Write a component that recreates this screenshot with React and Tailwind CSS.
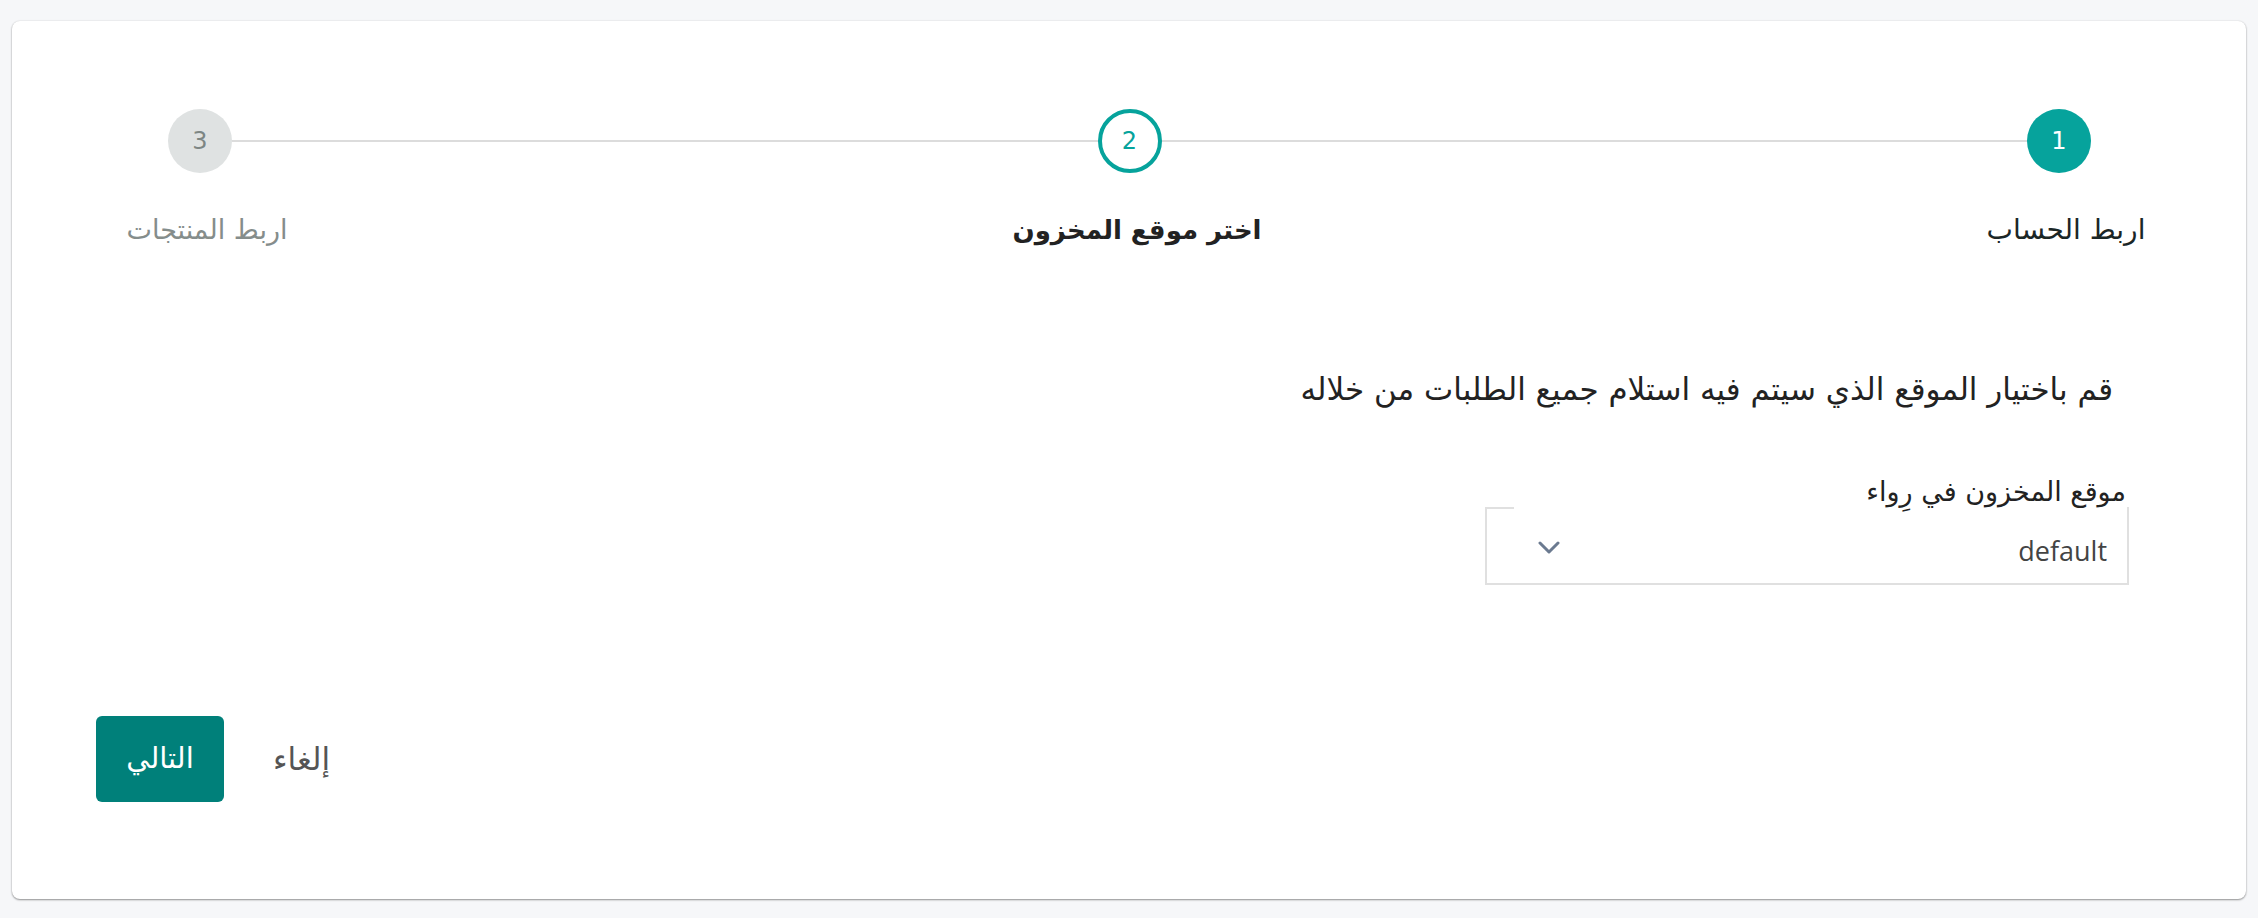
const steps = [
  { n: 1, label: 'اربط الحساب', state: 'done' },
  { n: 2, label: 'اختر موقع المخزون', state: 'active' },
  { n: 3, label: 'اربط المنتجات', state: 'todo' },
];

const StepCircle = ({ step }) => {
  if (step.state === 'done') {
    return (
      <div className="w-16 h-16 shrink-0 rounded-full bg-[#06a39c] text-white flex items-center justify-center text-[24px]">
        {step.n}
      </div>
    );
  }
  if (step.state === 'active') {
    return (
      <div className="w-16 h-16 shrink-0 rounded-full border-[4px] border-[#06a39c] bg-white text-[#06a39c] flex items-center justify-center text-[24px]">
        {step.n}
      </div>
    );
  }
  return (
    <div className="w-16 h-16 shrink-0 rounded-full bg-[#dfe2e2] text-[#7d8684] flex items-center justify-center text-[24px]">
      {step.n}
    </div>
  );
};

const App = () => {
  return (
    <div
      dir="rtl"
      className="min-h-screen bg-[#f6f7f9] pt-[21px] px-[12px] pb-[19px] font-['DejaVu_Sans','Noto_Sans',sans-serif]"
    >
      <div className="bg-white rounded-lg shadow-[0_1px_2px_rgba(0,0,0,0.4),0_0_2px_rgba(0,0,0,0.1)] h-[878px] flex flex-col">
        {/* stepper */}
        <div className="pt-[88px] pr-[155px] pl-[156px] flex items-center">
          <StepCircle step={steps[0]} />
          <div className="flex-1 h-[2px] bg-[#dcdcdc]" />
          <StepCircle step={steps[1]} />
          <div className="flex-1 h-[2px] bg-[#dcdcdc]" />
          <StepCircle step={steps[2]} />
        </div>
        <div className="px-[37px] mt-[38px] flex justify-between">
          <div className="w-[300px] text-center text-[28px] leading-[38px] text-[#1b2626] translate-x-[7px]">{steps[0].label}</div>
          <div className="w-[300px] text-center text-[26px] leading-[38px] font-bold text-[#222222] translate-x-[8px]">{steps[1].label}</div>
          <div className="w-[300px] text-center text-[27px] leading-[38px] text-[#858d8b] translate-x-[8px]">{steps[2].label}</div>
        </div>

        {/* content */}
        <div className="pr-[117px] mt-[122px] flex flex-col items-start">
          <p className="mr-[16px] text-[31px] leading-[36px] text-[#222222]">
            قم باختيار الموقع الذي سيتم فيه استلام جميع الطلبات من خلاله
          </p>
          <label className="mt-[70px] mr-[3px] text-[27px] leading-[30px] text-[#222222]">
            موقع المخزون في رِواء
          </label>
          <div className="relative w-[644px] h-[78px] border-x-2 border-b-2 border-[#e0e0e0] flex items-center justify-between pr-[20px] pl-[51px]">
            <span className="absolute top-0 left-[-2px] w-[29px] h-[2px] bg-[#e0e0e0]" />
            <span className="mt-[12px] text-[27px] text-[#444444] font-['Open_Sans',sans-serif]">default</span>
            <svg width="22" height="14" viewBox="0 0 22 14" className="mt-[6px]">
              <path d="M2 2 L11 11 L20 2" fill="none" stroke="#6b7a90" strokeWidth="3" strokeLinecap="round" strokeLinejoin="round" />
            </svg>
          </div>
        </div>

        {/* actions */}
        <div className="mt-auto mb-[97px] pl-[84px] flex items-center justify-end gap-[49px]">
          <button className="text-[31px] text-[#555555]">إلغاء</button>
          <button className="w-[128px] h-[86px] rounded-md bg-[#00807a] text-white text-[29px]">
            التالي
          </button>
        </div>
      </div>
    </div>
  );
};

export default App;
